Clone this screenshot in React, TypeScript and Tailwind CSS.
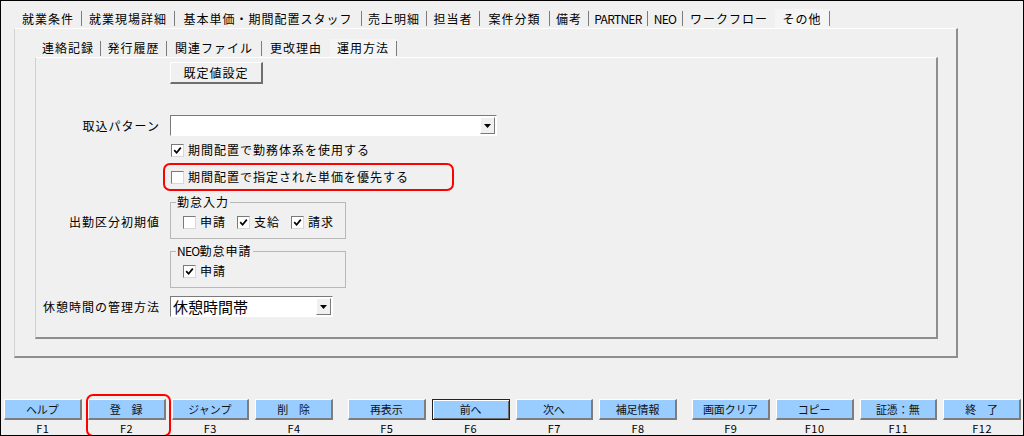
import React from 'react'

const topTabs = [
  { label: '就業条件', w: 'w-[67px]' },
  { label: '就業現場詳細', w: 'w-[93px]' },
  { label: '基本単価・期間配置スタッフ', w: 'w-[187px]' },
  { label: '売上明細', w: 'w-[65px]' },
  { label: '担当者', w: 'w-[53px]' },
  { label: '案件分類', w: 'w-[70px]' },
  { label: '備考', w: 'w-[39px]' },
  { label: 'PARTNER', w: 'w-[59px]', latin: true },
  { label: 'NEO', w: 'w-[35px]', latin: true },
  { label: 'ワークフロー', w: 'w-[92px]' },
  { label: 'その他', w: 'w-[55px]' },
]

const subTabs = [
  { label: '連絡記録', w: 'w-[65px]' },
  { label: '発行履歴', w: 'w-[66px]' },
  { label: '関連ファイル', w: 'w-[95px]' },
  { label: '更改理由', w: 'w-[68px]' },
  { label: '運用方法', w: 'w-[67px]' },
]

const fkeyGroups = [
  [
    { label: 'ヘルプ', key: 'F1' },
    { label: '登　録', key: 'F2', mark: true },
    { label: 'ジャンプ', key: 'F3' },
    { label: '削　除', key: 'F4' },
  ],
  [
    { label: '再表示', key: 'F5' },
    { label: '前へ', key: 'F6', active: true },
    { label: '次へ', key: 'F7' },
    { label: '補足情報', key: 'F8' },
  ],
  [
    { label: '画面クリア', key: 'F9' },
    { label: 'コピー', key: 'F10' },
    { label: '証憑：無', key: 'F11' },
    { label: '終　了', key: 'F12' },
  ],
]

type TabDef = { label: string; w: string; latin?: boolean }

function TabStrip({ tabs, selected }: { tabs: TabDef[]; selected: number }) {
  return (
    <>
      {tabs.map((t, i) => {
        const isSel = i === selected
        const sep = i !== selected - 1
        return (
          <div
            key={t.label}
            className={`flex h-full items-center ${t.w} ${isSel ? 'bg-[#f5f5f5]' : ''}`}
          >
            <span
              className={`flex-1 text-center leading-[14px] ${t.latin ? 'tracking-[-0.7px]' : 'tracking-[1px]'}`}
            >
              {t.label}
            </span>
            {sep && <span className="h-[15px] w-px shrink-0 bg-[#7c7c7c]" />}
          </div>
        )
      })}
    </>
  )
}

function CheckBox({ checked }: { checked?: boolean }) {
  return (
    <span className="flex h-[13px] w-[13px] shrink-0 items-center justify-center border border-t-[#7a7a7a] border-l-[#7a7a7a] border-b-[#d8d8d8] border-r-[#d8d8d8] bg-white">
      {checked && (
        <svg width="9" height="9" viewBox="0 0 9 9">
          <path d="M1.2 4.2 L3.6 6.8 L7.8 1.6" fill="none" stroke="#000" strokeWidth="1.7" />
        </svg>
      )}
    </span>
  )
}

function Check({ label, checked }: { label: string; checked?: boolean }) {
  return (
    <label className="flex items-center gap-[4px]">
      <CheckBox checked={checked} />
      <span className="tracking-[1px] leading-[14px]">{label}</span>
    </label>
  )
}

function Combo({ w, text, big }: { w: string; text?: string; big?: boolean }) {
  return (
    <div className={`flex h-[21px] ${w} border border-t-[#7a7a7a] border-l-[#7a7a7a] border-b-white border-r-white bg-white`}>
      <div className={`flex flex-1 items-center pl-[2px] ${big ? 'text-[15px] leading-[17px]' : ''}`}>
        {text}
      </div>
      <div className="m-px flex w-[15px] items-center justify-center border border-t-white border-l-white border-b-[#7a7a7a] border-r-[#7a7a7a] bg-[#f0f0f0]">
        <svg width="7" height="4" viewBox="0 0 7 4">
          <path d="M0 0 H7 L3.5 4 Z" fill="#000" />
        </svg>
      </div>
    </div>
  )
}

function Group({ title, children }: { title: React.ReactNode; children: React.ReactNode }) {
  return (
    <fieldset className="h-[43px] w-[176px] border border-[#b8b8b8]">
      <legend className="ml-[5px] px-[1px] tracking-[1px] leading-[12px]">{title}</legend>
      <div className="ml-[12px] mt-[7px] flex h-[14px] items-center gap-[11px]">{children}</div>
    </fieldset>
  )
}

function FKey({ label, fk, active, mark }: { label: string; fk: string; active?: boolean; mark?: boolean }) {
  return (
    <div className="relative flex flex-1 flex-col">
      <div
        className={`flex h-[21px] items-center justify-center bg-[#99ccff] text-[11px] leading-[13px] text-[#111] ${
          active
            ? 'border border-[#222] shadow-[inset_1px_1px_0_#fff,inset_-1px_-1px_0_#6d6d6d]'
            : 'border-t border-l border-r-2 border-b-2 border-t-white border-l-white border-r-[#7d7d7d] border-b-[#7d7d7d]'
        }`}
      >
        {label}
      </div>
      <div className="flex h-[15px] items-center justify-center text-[11px] leading-[12px] tracking-[0.5px]">{fk}</div>
      {mark && (
        <div className="pointer-events-none absolute -left-[2px] -top-[5px] h-[43px] w-[85px] rounded-[7px] border-[2.5px] border-[#ff0000]" />
      )}
    </div>
  )
}

export default function App() {
  return (
    <div className="relative flex h-[436px] w-[1024px] flex-col overflow-hidden border border-black bg-[#f0f0f0] font-['Noto_Sans_CJK_JP',sans-serif] text-[12px] leading-none text-black">
      {/* top tabs */}
      <div className="ml-[14px] mt-[8px] flex h-[19px]">
        <TabStrip tabs={topTabs} selected={10} />
      </div>

      {/* outer tab page */}
      <div className="ml-[13px] flex h-[330px] w-[944px] flex-col border-l border-t border-r-2 border-b-2 border-l-[#d2d2d2] border-t-[#ffffff] border-r-[#8e8e8e] border-b-[#8e8e8e]">
        <div className="ml-[21px] mt-[10px] flex h-[18px]">
          <TabStrip tabs={subTabs} selected={4} />
        </div>

        {/* inner tab page */}
        <div className="ml-[20px] flex h-[282px] w-[903px] flex-col border-l border-t border-r-2 border-b-2 border-l-[#cfcfcf] border-t-[#ffffff] border-r-[#8e8e8e] border-b-[#8e8e8e]">
          <button
            type="button"
            className="ml-[134px] mt-[4px] flex h-[22px] w-[93px] items-center justify-center border-t border-l border-r-2 border-b-2 border-t-white border-l-white border-r-[#6f6f6f] border-b-[#6f6f6f] bg-[#f0f0f0] tracking-[1px] leading-[14px]"
          >
            既定値設定
          </button>

          <div className="mt-[31px] flex items-center">
            <div className="w-[124px] text-right tracking-[1px] leading-[14px]">取込パターン</div>
            <div className="ml-[10px]">
              <Combo w="w-[327px]" />
            </div>
          </div>

          <div className="ml-[135px] mt-[6px] flex h-[16px] items-center">
            <Check label="期間配置で勤務体系を使用する" checked />
          </div>

          <div className="relative ml-[135px] mt-[11px] flex h-[16px] items-center">
            <Check label="期間配置で指定された単価を優先する" />
            <div className="pointer-events-none absolute -left-[8px] -top-[6px] h-[28px] w-[291px] rounded-[7px] border-[2.5px] border-[#ff0000]" />
          </div>

          <div className="mt-[11px] flex items-start">
            <div className="mt-[19px] w-[124px] text-right tracking-[1px] leading-[14px]">出勤区分初期値</div>
            <div className="ml-[10px]">
              <Group title="勤怠入力">
                <Check label="申請" />
                <Check label="支給" checked />
                <Check label="請求" checked />
              </Group>
            </div>
          </div>

          <div className="ml-[134px] mt-[6px]">
            <Group
              title={
                <>
                  <span className="tracking-[-0.7px]">NEO</span>
                  勤怠申請
                </>
              }
            >
              <Check label="申請" checked />
            </Group>
          </div>

          <div className="mt-[8px] flex items-center">
            <div className="w-[124px] text-right tracking-[1px] leading-[14px]">休憩時間の管理方法</div>
            <div className="ml-[10px]">
              <Combo w="w-[163px]" text="休憩時間帯" big />
            </div>
          </div>
        </div>
      </div>

      {/* function keys */}
      <div className="mt-auto flex gap-[15px] pl-[3px] pr-[2px]">
        {fkeyGroups.map((g, gi) => (
          <div key={gi} className="flex flex-1 gap-[6px]">
            {g.map((b) => (
              <FKey key={b.key} label={b.label} fk={b.key} active={b.active} mark={b.mark} />
            ))}
          </div>
        ))}
      </div>
    </div>
  )
}
